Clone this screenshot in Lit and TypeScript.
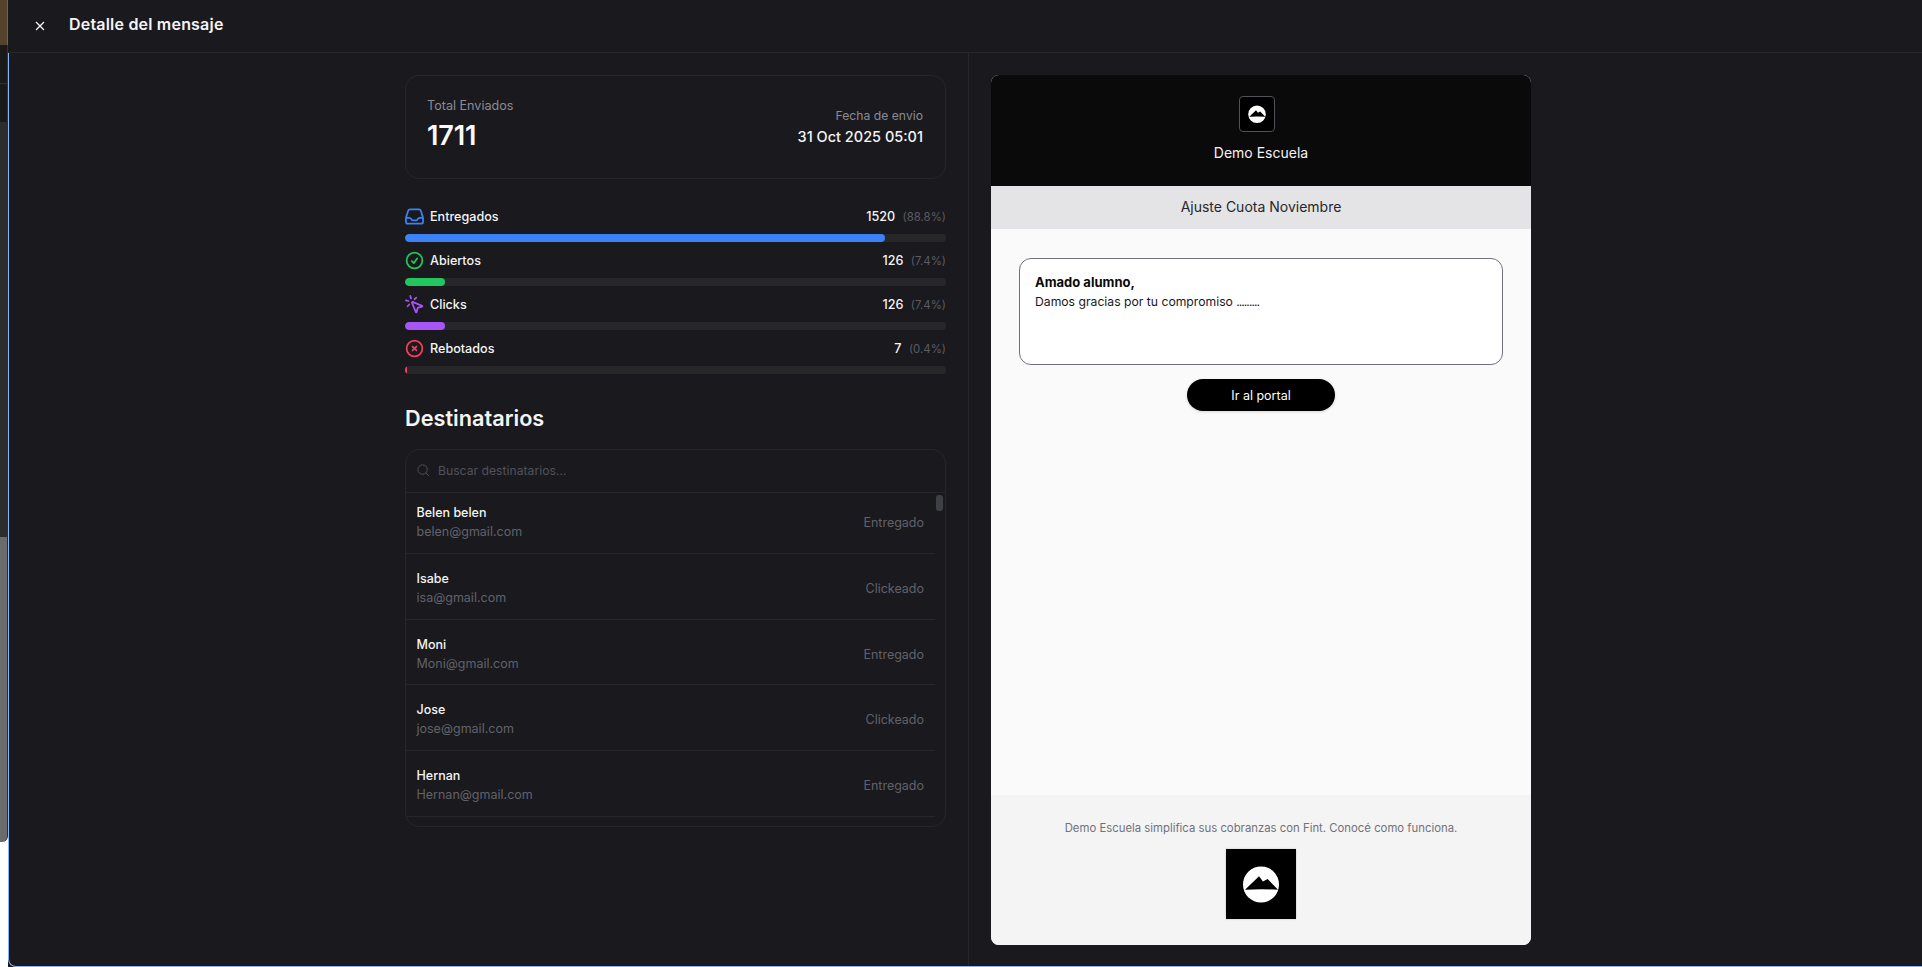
import { LitElement, html, css, svg } from 'lit';
import { customElement } from 'lit/decorators.js';

type Stat = { label: string; value: number; pct: string; width: number; color: string; icon: ReturnType<typeof svg> };

const STATS: Stat[] = [
  {
    label: 'Entregados',
    value: 1520,
    pct: '(88.8%)',
    width: 88.8,
    color: '#3b82f6',
    icon: svg`<path d="M2.25 13.5h3.86a2.25 2.25 0 0 1 2.012 1.244l.256.512a2.25 2.25 0 0 0 2.013 1.244h3.218a2.25 2.25 0 0 0 2.013-1.244l.256-.512a2.25 2.25 0 0 1 2.013-1.244h3.859m-19.5.338V18a2.25 2.25 0 0 0 2.25 2.25h15A2.25 2.25 0 0 0 21.75 18v-4.162c0-.224-.034-.447-.1-.661L19.24 5.338a2.25 2.25 0 0 0-2.15-1.588H6.911a2.25 2.25 0 0 0-2.15 1.588L2.35 13.177a2.25 2.25 0 0 0-.1.661Z"/>`,
  },
  {
    label: 'Abiertos',
    value: 126,
    pct: '(7.4%)',
    width: 7.4,
    color: '#22c55e',
    icon: svg`<path d="M9 12.75 11.25 15 15 9.75M21 12a9 9 0 1 1-18 0 9 9 0 0 1 18 0Z"/>`,
  },
  {
    label: 'Clicks',
    value: 126,
    pct: '(7.4%)',
    width: 7.4,
    color: '#a855f7',
    icon: svg`<path d="M14 4.1 12 6m-6.9 2-2.9-.8M6 12l-1.9 2M7.2 2.2 8 5.1m1.037 4.59a.498.498 0 0 1 .653-.653l11 4.5a.5.5 0 0 1-.074.949l-4.349 1.041a1 1 0 0 0-.74.739l-1.04 4.35a.5.5 0 0 1-.95.074z"/>`,
  },
  {
    label: 'Rebotados',
    value: 7,
    pct: '(0.4%)',
    width: 0.4,
    color: '#f43f5e',
    icon: svg`<path d="m9.75 9.75 4.5 4.5m0-4.5-4.5 4.5M21 12a9 9 0 1 1-18 0 9 9 0 0 1 18 0Z"/>`,
  },
];

const RECIPIENTS = [
  { name: 'Belen belen', email: 'belen@gmail.com', status: 'Entregado' },
  { name: 'Isabe', email: 'isa@gmail.com', status: 'Clickeado' },
  { name: 'Moni', email: 'Moni@gmail.com', status: 'Entregado' },
  { name: 'Jose', email: 'jose@gmail.com', status: 'Clickeado' },
  { name: 'Hernan', email: 'Hernan@gmail.com', status: 'Entregado' },
];

const logo = html`<svg viewBox="0 0 70 70" class="logo-mark">
  <circle cx="35" cy="35.5" r="18" fill="#fff"></circle>
  <path d="M19 40.8Q35 39.6 52 40.8L41.6 30 37 32.6 33 27.2Z" fill="#000"></path>
</svg>`;

@customElement('app-root')
export class AppRoot extends LitElement {
  static styles = css`
    :host {
      display: flex;
      width: 1922px;
      height: 967px;
      overflow: hidden;
      background: #19191e;
      font-family: Inter, 'Liberation Sans', sans-serif;
      color: #fafafa;
    }

    /* ── page behind the panel ─────────────────────────── */
    .behind {
      width: 8px;
      flex: none;
      display: flex;
      flex-direction: column;
      background: #fff;
    }
    .behind div { flex: none; }
    .b-brown { height: 45px; background: #54432a; border-right: 1px solid #6f6350; }
    .b-dark { height: 38px; background: #1a1a1a; border-right: 1px solid #333; }
    .b-dark + .b-dark { border-top: 1px solid #333; }
    .b-track { height: 415px; background: #2d2d2d; }
    .b-thumb { height: 305px; background: #6b6b6b; border-right: 1px solid #2d2d2d; border-radius: 0 0 6px 0; }

    .panel {
      flex: 1;
      min-width: 0;
      display: flex;
      flex-direction: column;
    }

    .head {
      flex: none;
      height: 52px;
      display: flex;
      align-items: center;
      gap: 21px;
      padding-left: 24px;
      border-bottom: 1px solid #27272a;
    }
    .head svg { width: 16px; height: 16px; fill: none; stroke: #fff; stroke-width: 1.75; margin-top: -1px; }
    .head h1 { margin: -5px 0 0; font-size: 16px; font-weight: 600; line-height: 24px; letter-spacing: 0.2px; color: #f4f4f5; }

    .main {
      flex: 1;
      min-height: 0;
      display: grid;
      grid-template-columns: 960px 1fr;
      border-left: 1px solid #8ab4f8;
      border-bottom: 1px solid #8ab4f8;
      border-bottom-left-radius: 8px;
    }

    .left {
      display: flex;
      justify-content: flex-end;
      padding: 22px 22px 0 0;
      border-right: 1px solid #27272a;
    }
    .col { width: 541px; }

    .summary {
      height: 104px;
      box-sizing: border-box;
      border: 1px solid #27272a;
      border-radius: 14px;
      padding: 21px 22px 0 21px;
      display: flex;
      justify-content: space-between;
    }
    .sum-label { font-size: 12.6px; line-height: 18px; color: #8b8b93; }
    .sum-right .sum-label { font-size: 12.2px; }
    .sum-total { font-size: 27px; line-height: 32px; font-weight: 600; margin-top: 5px; letter-spacing: -0.1px; }
    .sum-right { text-align: right; padding-top: 10px; }
    .sum-date { font-size: 14.5px; line-height: 20px; font-weight: 500; margin-top: 2px; color: #f4f4f5; }

    .stats { margin-top: 28px; display: flex; flex-direction: column; gap: 9px; }
    .stat-head {
      height: 20px;
      box-sizing: border-box;
      padding-bottom: 1px;
      display: flex;
      align-items: center;
      font-size: 12.6px;
      font-weight: 500;
      margin-bottom: 7px;
    }
    .stat-head svg { width: 21px; height: 21px; flex: none; fill: none; stroke-width: 2; stroke-linecap: round; stroke-linejoin: round; margin: 0 5px 0 -1px; }
    .stat-label { flex: 1; color: #f4f4f5; }
    .stat-value { color: #f4f4f5; }
    .stat-pct { color: #5b5b63; font-size: 11.4px; font-weight: 400; margin-left: 7.5px; }
    .track { height: 8px; border-radius: 4px; background: #27272a; overflow: hidden; }
    .fill { height: 100%; border-radius: 4px; }

    h2 { margin: 30px 0 17px; font-size: 21.7px; line-height: 28px; font-weight: 600; color: #f4f4f5; }

    .box {
      height: 378px;
      box-sizing: border-box;
      border: 1px solid #27272a;
      border-radius: 14px;
      display: flex;
      flex-direction: column;
      overflow: hidden;
    }
    .search {
      flex: none;
      height: 43px;
      box-sizing: border-box;
      padding: 0 0 2px 10px;
      display: flex;
      align-items: center;
      gap: 7px;
      border-bottom: 1px solid #27272a;
      font-size: 12.2px;
      color: #52525b;
    }
    .search svg { width: 15px; height: 15px; fill: none; stroke: #52525b; stroke-width: 1.5; }

    .list { position: relative; flex: 1; min-height: 0; overflow: hidden; padding-right: 10px; }
    .rows { margin-top: -5px; }
    .row {
      height: 65.75px;
      box-sizing: border-box;
      display: flex;
      align-items: center;
      justify-content: space-between;
      padding: 4.5px 11px 0 10.5px;
      border-bottom: 1px solid #27272a;
    }
    .name { font-size: 12.5px; line-height: 18px; font-weight: 500; color: #f4f4f5; }
    .email { font-size: 12.5px; line-height: 18px; margin-top: 1px; color: #62626a; }
    .status { font-size: 12.5px; color: #62626a; }
    .thumb { position: absolute; top: 2px; right: 2px; width: 7px; height: 16px; border-radius: 3px; background: #3f3f46; }

    .right { padding: 22px 0 0 22px; }
    .mail {
      width: 540px;
      height: 870px;
      border-radius: 8px;
      overflow: hidden;
      display: flex;
      flex-direction: column;
      background: #fafafa;
    }
    .mail-head {
      flex: none;
      height: 111px;
      box-sizing: border-box;
      padding-top: 21px;
      background: #0a0a0a;
      display: flex;
      flex-direction: column;
      align-items: center;
    }
    .logo-box {
      width: 36px;
      height: 36px;
      box-sizing: border-box;
      margin-left: -8px;
      border: 1px solid #52525b;
      border-radius: 4px;
      background: #000;
      display: flex;
      align-items: center;
      justify-content: center;
    }
    .logo-box .logo-mark { width: 34px; height: 34px; }
    .school { margin-top: 11px; font-size: 14px; line-height: 20px; color: #f4f4f5; }
    .subject {
      flex: none;
      height: 43px;
      box-sizing: border-box;
      padding-bottom: 2px;
      display: flex;
      align-items: center;
      justify-content: center;
      background: #e4e4e7;
      font-size: 14px;
      color: #27272a;
    }
    .mail-body {
      flex: 1;
      min-height: 0;
      padding: 29px 28px 0;
      display: flex;
      flex-direction: column;
      align-items: center;
    }
    .message {
      align-self: stretch;
      height: 107px;
      box-sizing: border-box;
      border: 1px solid #71717a;
      border-radius: 12px;
      background: #fff;
      padding: 14px 15px;
      font-size: 12.2px;
      line-height: 19px;
      color: #18181b;
    }
    .message b { display: block; font-size: 13px; font-weight: 700; color: #09090b; }
    .dots { letter-spacing: -1px; }
    .cta {
      margin-top: 14px;
      width: 148px;
      height: 32px;
      border-radius: 16px;
      background: #000;
      color: #fff;
      font-size: 12.5px;
      font-weight: 400;
      display: flex;
      align-items: center;
      justify-content: center;
      box-shadow: 0 1px 3px rgba(0, 0, 0, 0.15);
    }
    .mail-foot {
      flex: none;
      height: 150px;
      box-sizing: border-box;
      padding-top: 24px;
      background: #f4f4f5;
      display: flex;
      flex-direction: column;
      align-items: center;
      font-size: 11.35px;
      line-height: 18px;
      color: #71717a;
    }
    .foot-logo {
      margin-top: 12px;
      width: 70px;
      height: 70px;
      background: #000;
      box-shadow: 0 0 2px rgba(0, 0, 0, 0.2);
    }
    .foot-logo .logo-mark { display: block; width: 70px; height: 70px; }
  `;

  render() {
    return html`
      <div class="behind">
        <div class="b-brown"></div>
        <div class="b-dark"></div>
        <div class="b-dark"></div>
        <div class="b-track"></div>
        <div class="b-thumb"></div>
      </div>
      <div class="panel">
        <header class="head">
          <svg viewBox="0 0 24 24"><path d="M6 18 18 6M6 6l12 12"></path></svg>
          <h1>Detalle del mensaje</h1>
        </header>
        <div class="main">
          <section class="left">
            <div class="col">
              <div class="summary">
                <div>
                  <div class="sum-label">Total Enviados</div>
                  <div class="sum-total">1711</div>
                </div>
                <div class="sum-right">
                  <div class="sum-label">Fecha de envio</div>
                  <div class="sum-date">31 Oct 2025 05:01</div>
                </div>
              </div>
              <div class="stats">${STATS.map((s) => this.renderStat(s))}</div>
              <h2>Destinatarios</h2>
              <div class="box">
                <div class="search">
                  <svg viewBox="0 0 24 24"><path d="m21 21-5.197-5.197m0 0A7.5 7.5 0 1 0 5.196 5.196a7.5 7.5 0 0 0 10.607 10.607Z"></path></svg>
                  Buscar destinatarios...
                </div>
                <div class="list">
                  <div class="rows">
                    ${RECIPIENTS.map(
                      (r) => html`<div class="row">
                        <div>
                          <div class="name">${r.name}</div>
                          <div class="email">${r.email}</div>
                        </div>
                        <div class="status">${r.status}</div>
                      </div>`
                    )}
                  </div>
                  <div class="thumb"></div>
                </div>
              </div>
            </div>
          </section>
          <section class="right">
            <div class="mail">
              <div class="mail-head">
                <div class="logo-box">${logo}</div>
                <div class="school">Demo Escuela</div>
              </div>
              <div class="subject">Ajuste Cuota Noviembre</div>
              <div class="mail-body">
                <div class="message">
                  <b>Amado alumno,</b>
                  Damos gracias por tu compromiso <span class="dots">.........</span>
                </div>
                <div class="cta">Ir al portal</div>
              </div>
              <div class="mail-foot">
                Demo Escuela simplifica sus cobranzas con Fint. Conocé como funciona.
                <div class="foot-logo">${logo}</div>
              </div>
            </div>
          </section>
        </div>
      </div>
    `;
  }

  private renderStat(s: Stat) {
    return html`<div>
      <div class="stat-head">
        <svg viewBox="0 0 24 24" stroke=${s.color}>${s.icon}</svg>
        <span class="stat-label">${s.label}</span>
        <span class="stat-value">${s.value}</span>
        <span class="stat-pct">${s.pct}</span>
      </div>
      <div class="track"><div class="fill" style="width:${s.width}%;background:${s.color}"></div></div>
    </div>`;
  }
}

declare global {
  interface HTMLElementTagNameMap {
    'app-root': AppRoot;
  }
}
